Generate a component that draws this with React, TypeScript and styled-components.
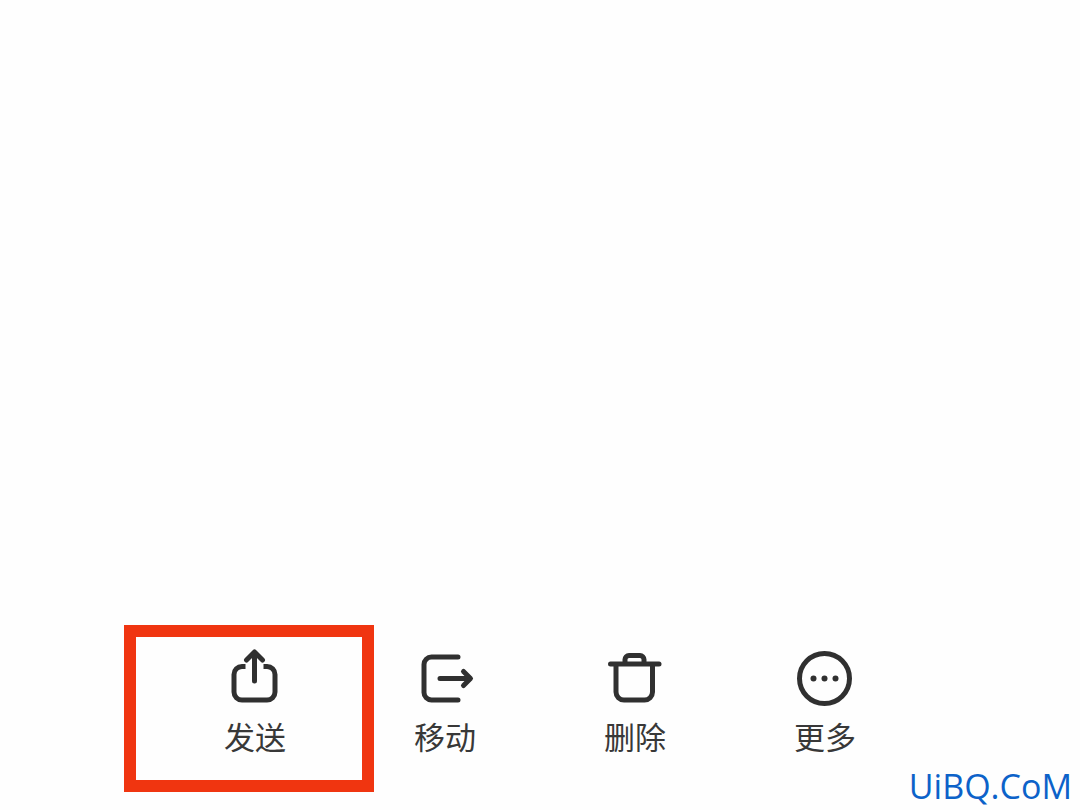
import React from "react";
import styled, { createGlobalStyle } from "styled-components";

const GlobalStyle = createGlobalStyle`
  * { box-sizing: border-box; }
  body {
    margin: 0;
    background: #fefefe;
    font-family: "Liberation Sans", "Noto Sans CJK SC", sans-serif;
  }
`;

const Page = styled.main`
  min-height: 100vh;
  display: flex;
  flex-direction: column;
  justify-content: flex-end;
`;

const Toolbar = styled.nav`
  display: grid;
  grid-template-columns: repeat(4, 1fr);
  padding: 0 160px 12px;
`;

const Action = styled.button`
  position: relative;
  display: flex;
  flex-direction: column;
  align-items: center;
  gap: 8px;
  padding: 0 0 42px;
  border: 0;
  background: none;
  color: #383838;
  font-family: "Noto Sans CJK SC", sans-serif;
  font-size: 31px;
  font-weight: 400;
  line-height: 40px;
  cursor: pointer;
`;

const Icon = styled.svg`
  width: 60px;
  height: 60px;
  fill: none;
  stroke: #303030;
  stroke-width: 5;
  stroke-linejoin: round;
`;

const Highlight = styled.span`
  position: absolute;
  inset: -23px -24px 6px -36px;
  border: 12px solid #f03510;
  pointer-events: none;
`;

const Footer = styled.footer`
  display: flex;
  justify-content: flex-end;
  margin-top: -46px;
  padding: 0 8px 2px;
  color: #0c62c9;
  font-family: "Open Sans", sans-serif;
  font-size: 34px;
  line-height: 44px;
`;

const SendIcon = () => (
  <Icon viewBox="0 0 60 60" aria-hidden="true">
    <path d="M20.5 18.5H17a8 8 0 0 0-8 8V44a8 8 0 0 0 8 8h25a8 8 0 0 0 8-8V26.5a8 8 0 0 0-8-8h-3.5" />
    <path strokeLinecap="round" d="M29.5 4.5V33M21.5 12l8-8 8 8" />
  </Icon>
);

const MoveIcon = () => (
  <Icon viewBox="0 0 60 60" strokeLinecap="round" aria-hidden="true">
    <path d="M43 9H16.5a7.5 7.5 0 0 0-7.5 7.5v28a7.5 7.5 0 0 0 7.5 7.5H43" />
    <path d="M25 30.5h30M48.5 23.5l7 7-7 7" />
  </Icon>
);

const DeleteIcon = () => (
  <Icon viewBox="0 0 60 60" aria-hidden="true">
    <path strokeLinecap="round" d="M5.5 16H54" />
    <path d="M11 16v28a8 8 0 0 0 8 8h20.5a8 8 0 0 0 8-8V16" />
    <path d="M20 16v-4.5a4 4 0 0 1 4-4h11a4 4 0 0 1 4 4V16" />
  </Icon>
);

const MoreIcon = () => (
  <Icon viewBox="0 0 60 60" aria-hidden="true">
    <circle cx="29.5" cy="30.5" r="25" />
    <g fill="#303030" stroke="none">
      <circle cx="18.5" cy="30.5" r="3" />
      <circle cx="29.5" cy="30.5" r="3" />
      <circle cx="40.5" cy="30.5" r="3" />
    </g>
  </Icon>
);

const actions = [
  { label: "发送", Glyph: SendIcon, highlighted: true },
  { label: "移动", Glyph: MoveIcon, highlighted: false },
  { label: "删除", Glyph: DeleteIcon, highlighted: false },
  { label: "更多", Glyph: MoreIcon, highlighted: false },
];

export default function App() {
  return (
    <>
      <GlobalStyle />
      <Page>
        <Toolbar>
          {actions.map(({ label, Glyph, highlighted }) => (
            <Action key={label} type="button">
              <Glyph />
              <span>{label}</span>
              {highlighted && <Highlight />}
            </Action>
          ))}
        </Toolbar>
        <Footer>UiBQ.CoM</Footer>
      </Page>
    </>
  );
}
